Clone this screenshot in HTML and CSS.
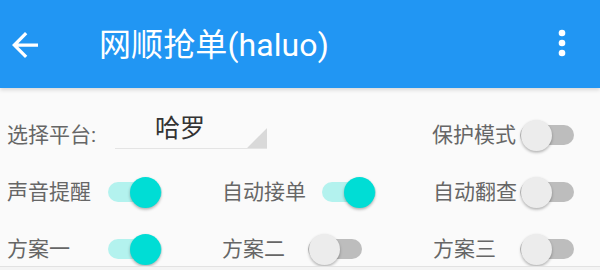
FILE: index.html
```html
<!DOCTYPE html>
<html lang="zh">
<head>
<meta charset="utf-8">
<link rel="stylesheet" href="styles.css">
</head>
<body>
<div class="screen">
  <header class="toolbar">
    <svg class="back" viewBox="4 4 16 16" width="26" height="26"><path fill="#fff" d="M20 11H7.83l5.59-5.59L12 4l-8 8 8 8 1.41-1.41L7.83 13H20v-2z"/></svg>
    <h1 class="title">网顺抢单(haluo)</h1>
    <svg class="more" viewBox="0 0 24 24" width="40" height="40"><circle cx="12" cy="6" r="2" fill="#fff"/><circle cx="12" cy="12" r="2" fill="#fff"/><circle cx="12" cy="18" r="2" fill="#fff"/></svg>
  </header>
  <main class="content">
    <div class="row row-top">
      <span class="label">选择平台:</span>
      <div class="spinner"><span class="spinner-text">哈罗</span></div>
      <div class="right-group">
        <span class="label">保护模式</span>
        <span class="switch off"><span class="track"></span><span class="thumb"></span></span>
      </div>
    </div>
    <div class="row grid-row">
      <div class="cell c1"><span class="label">声音提醒</span><span class="switch on"><span class="track"></span><span class="thumb"></span></span></div>
      <div class="cell c2"><span class="label">自动接单</span><span class="switch on"><span class="track"></span><span class="thumb"></span></span></div>
      <div class="cell c3"><span class="label">自动翻查</span><span class="switch off"><span class="track"></span><span class="thumb"></span></span></div>
    </div>
    <div class="row grid-row">
      <div class="cell c1"><span class="label">方案一</span><span class="switch on"><span class="track"></span><span class="thumb"></span></span></div>
      <div class="cell c2 narrow"><span class="label">方案二</span><span class="switch off"><span class="track"></span><span class="thumb"></span></span></div>
      <div class="cell c3"><span class="label">方案三</span><span class="switch off"><span class="track"></span><span class="thumb"></span></span></div>
    </div>
  </main>
  <div class="footer"></div>
</div>
</body>
</html>
```

FILE: styles.css
```css
* { box-sizing: border-box; }
html, body { margin: 0; padding: 0; }
body {
  width: 600px;
  height: 270px;
  overflow: hidden;
  background: #fafafa;
  font-family: "Roboto", "Noto Sans CJK SC", sans-serif;
}
.screen {
  width: 600px;
  height: 270px;
  display: flex;
  flex-direction: column;
}
.toolbar {
  height: 88px;
  flex: none;
  background: #2196f3;
  display: flex;
  align-items: center;
  padding-left: 12px;
  padding-right: 18px;
  box-shadow: 0 2px 4px rgba(0,0,0,0.14);
  position: relative;
  z-index: 1;
}
.back { flex: none; margin-top: 2px; }
.title {
  margin: 2px 0 0 61px;
  font-weight: 400;
  font-size: 32px;
  color: #fff;
  line-height: 1;
  letter-spacing: 0.1px;
}
.more { margin-left: auto; margin-top: -2px; }
.content {
  height: 178px;
  flex: none;
  overflow: hidden;
  padding: 19px 26px 0 7px;
  display: flex;
  flex-direction: column;
  gap: 1px;
}
.row {
  height: 56px;
  flex: none;
  display: flex;
  align-items: center;
}
.label {
  font-size: 21px;
  color: #666;
  line-height: 1;
  white-space: nowrap;
}
.spinner {
  width: 152px;
  height: 40px;
  margin-left: 19px;
  margin-bottom: 12px;
  border-bottom: 1px solid #e4e4e4;
  position: relative;
  padding-left: 40px;
  display: flex;
  align-items: center;
}
.spinner::after {
  content: "";
  position: absolute;
  right: 0;
  bottom: 0;
  width: 20px;
  height: 20px;
  background: #d9d9d9;
  clip-path: polygon(100% 0, 100% 100%, 0 100%);
}
.spinner-text {
  font-size: 25px;
  color: #333;
  line-height: 1;
}
.right-group {
  margin-left: auto;
  display: flex;
  align-items: center;
  gap: 4px;
}
.grid-row {
  display: grid;
  grid-template-columns: 215px 211px 1fr;
}
.cell {
  display: flex;
  align-items: center;
  height: 100%;
}
.c1 .label { width: 101px; }
.c2 .label { width: 100px; }
.c2.narrow .label { width: 86px; }
.c3 .switch { margin-left: auto; }
.switch {
  position: relative;
  width: 54px;
  height: 34px;
  flex: none;
  display: flex;
  align-items: center;
}
.track {
  width: 54px;
  height: 20px;
  border-radius: 10px;
  background: #bdbdbd;
}
.switch.on .track { background: #b3f2ee; }
.thumb {
  position: absolute;
  top: 1.5px;
  width: 31px;
  height: 31px;
  border-radius: 50%;
  background: #ececec;
  box-shadow: 0 1.5px 3px rgba(0,0,0,0.3);
}
.switch.off .thumb { left: 1px; }
.switch.on .thumb { right: 1px; background: #00ddd5; }
.footer {
  flex: 1;
  border-top: 1px solid #e2e2e2;
  background: #f4f4f4;
}
```
